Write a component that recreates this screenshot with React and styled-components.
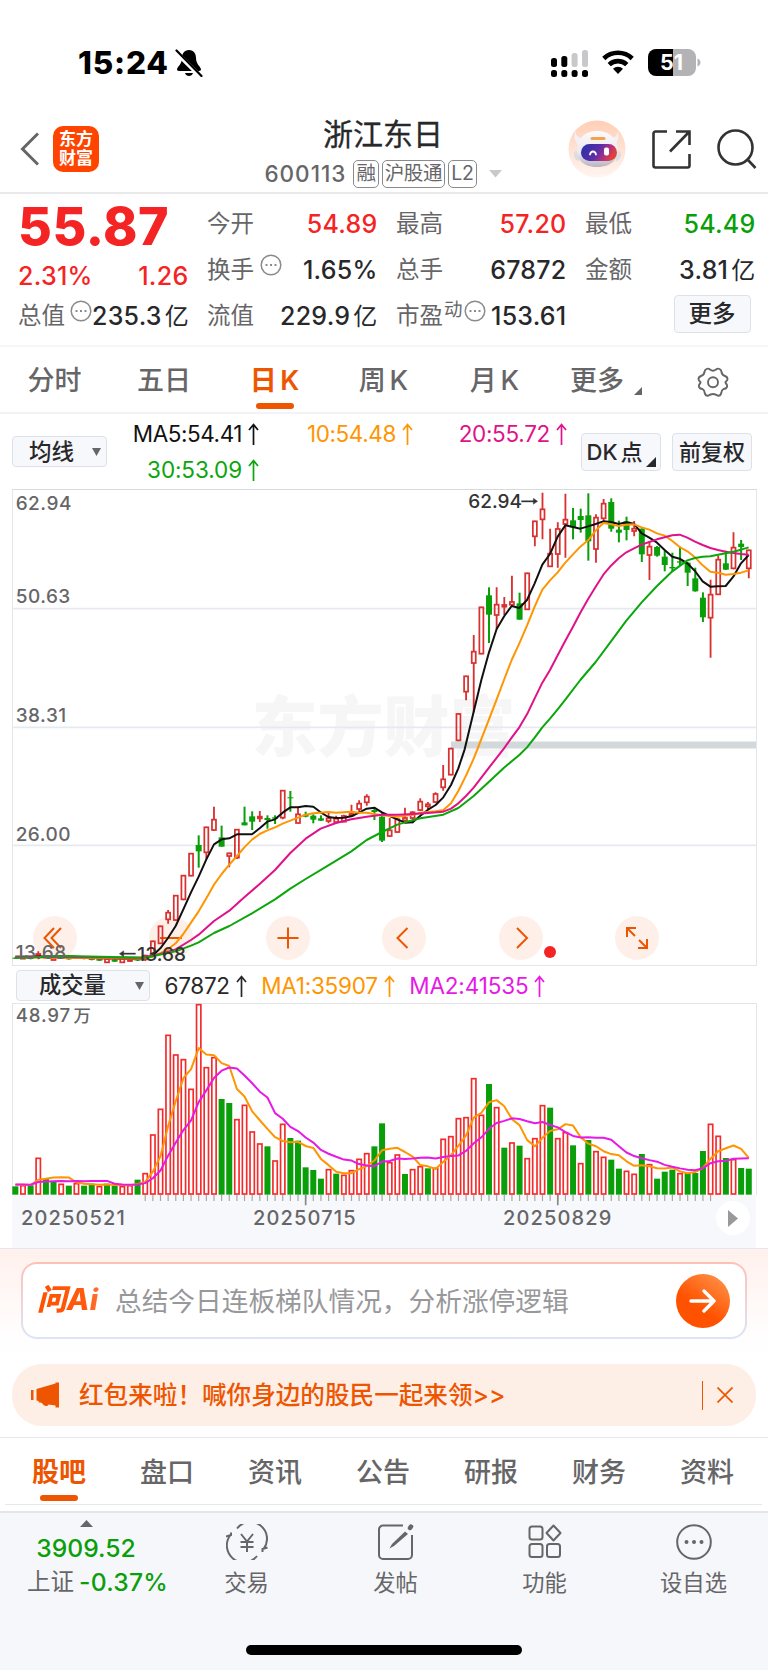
import React from "react";
import styled, { createGlobalStyle } from "styled-components";

const ORANGE = "#ee5500";
const RED = "#f52424";
const GREEN = "#0a9f0a";
const INK = "#28282b";
const GREY = "#666668";

const Global = createGlobalStyle`
  * { box-sizing: border-box; }
  body {
    margin: 0;
    background: #fff;
    color: ${INK};
    font-family: Inter, "Noto Sans CJK SC", sans-serif;
    font-size: 24px;
    line-height: 1;
    white-space: nowrap;
  }
  svg { display: block; flex: none; }
`;

const Page = styled.div`
  width: 768px;
  height: 1670px;
  overflow: hidden;
  display: flex;
  flex-direction: column;
`;

/* status bar */
const StatusBar = styled.div`
  height: 108px;
  padding: 17px 67px 0 78px;
  display: flex;
  align-items: center;
  justify-content: space-between;
  color: #000;
`;
const StatusSide = styled.div`
  display: flex;
  align-items: center;
  gap: ${(p) => p.$gap}px;
`;
const Clock = styled.span`
  font-size: 31.5px;
  font-weight: 800;
  letter-spacing: 0.8px;
`;

/* header */
const Header = styled.header`
  height: 86px;
  border-bottom: 2px solid #e9e9ec;
  display: grid;
  grid-template-columns: 239px 1fr 241px;
`;
const HeaderLeft = styled.div`
  display: flex;
  align-items: center;
  gap: 14px;
  padding: 0 0 2px 20px;
`;
const Logo = styled.div`
  width: 46px;
  height: 46px;
  border-radius: 10px;
  background: #ff4400;
  color: #fff;
  font-weight: 600;
  font-size: 17px;
  line-height: 19px;
  text-align: center;
  padding-top: 4px;
`;
const TitleBlock = styled.div`
  display: flex;
  flex-direction: column;
  align-items: center;
  padding-top: 10px;
`;
const Title = styled.h1`
  margin: 0;
  font-size: 30px;
  font-weight: 400;
  line-height: 32px;
  -webkit-text-stroke: 0.3px ${INK};
`;
const Codes = styled.div`
  display: flex;
  align-items: center;
  margin-top: 10px;
  gap: 3px;
  color: ${GREY};
  font-size: 22.5px;
  font-weight: 500;
  letter-spacing: 1px;
`;
const Badge = styled.span`
  height: 28px;
  padding: 0 2px;
  border: 1.5px solid #8a8a8c;
  border-radius: 5px;
  font-size: 19.5px;
  font-weight: 400;
  line-height: 25px;
  letter-spacing: -0.3px;
  &:nth-child(2) { margin-left: 4px; }
`;
const HeaderRight = styled.div`
  display: flex;
  align-items: center;
  justify-content: flex-end;
  padding: 0 11px 2px 0;
  gap: 26px;
`;

/* quote */
const Quote = styled.section`
  height: 153px;
  padding: 7px 12px 0 18px;
  border-bottom: 2px solid #f6f6f8;
  display: grid;
  grid-template-columns: repeat(4, 170.500px);
  column-gap: 18.500px;
`;
const QuoteCol = styled.div`
  display: flex;
  flex-direction: column;
`;
const Cell = styled.div`
  height: 46px;
  display: flex;
  align-items: center;
  justify-content: space-between;
  color: ${(p) => p.$color || INK};
  font-weight: 500;
  font-size: 25px;
  letter-spacing: 0.25px;
`;
const Yi = styled.span`
  margin-left: 3px;
  font-size: 24px;
  font-weight: 400;
`;
const Label = styled.span`
  color: ${GREY};
  font-size: 23.5px;
  font-weight: 400;
  letter-spacing: 0;
  display: inline-flex;
  align-items: center;
`;
const Sup = styled.sup`
  font-size: 18.5px;
  line-height: 18px;
  margin: -14px 0 0 1px;
  vertical-align: baseline;
`;
const Price = styled.div`
  height: 61px;
  font-size: 52px;
  line-height: 52px;
  font-weight: 800;
  letter-spacing: 0.5px;
  color: ${RED};
`;
const Change = styled.div`
  height: 28px;
  display: flex;
  justify-content: space-between;
  align-items: center;
  color: ${RED};
  font-size: 25px;
  font-weight: 500;
  letter-spacing: 0.3px;
  margin-bottom: 3px;
`;
const MoreWrap = styled.div`
  height: 46px;
  display: flex;
  justify-content: flex-end;
  padding: 2px 5px 0 0;
`;
const Button = styled.button`
  width: ${(p) => p.$w}px;
  height: ${(p) => p.$h}px;
  padding: ${(p) => p.$pad || 0};
  border: 1.5px solid #dfe1e8;
  border-radius: 4px;
  background: #f7f8fb;
  color: ${INK};
  font-family: inherit;
  font-size: ${(p) => p.$fs || 22}px;
  font-weight: 500;
  line-height: 1;
  word-spacing: -3px;
  display: flex;
  flex: none;
  align-items: center;
  justify-content: ${(p) => p.$justify || "center"};
  position: relative;
`;

/* period tabs */
const Tabs = styled.nav`
  height: 67px;
  border-bottom: 2px solid #f3f3f7;
  display: flex;
`;
const Tab = styled.div`
  width: ${(p) => p.$w}px;
  display: flex;
  flex-direction: column;
  align-items: center;
  padding-top: 20px;
  gap: 8px;
  color: ${(p) => (p.$active ? ORANGE : GREY)};
  font-size: 27px;
  font-weight: ${(p) => (p.$active ? 600 : 500)};
  line-height: 28px;
  word-spacing: -3.500px;
  &::after {
    content: "";
    width: 38px;
    height: 6px;
    border-radius: 3px;
    background: ${(p) => (p.$active ? ORANGE : "transparent")};
  }
`;
const TabText = styled.span`
  display: flex;
  align-items: flex-end;
  gap: 10px;
`;

/* indicator rows */
const MaRow = styled.div`
  height: 75px;
  display: flex;
  align-items: center;
  padding: 0 16px 0 12px;
`;
const MaGrid = styled.div`
  width: 474px;
  display: grid;
  grid-template-columns: 152px 154px 154px;
  row-gap: 14px;
  padding-top: 1px;
`;
const Ma = styled.span`
  color: ${(p) => p.$color};
  font-size: 22.5px;
  font-weight: 400;
  line-height: 22px;
  display: flex;
  justify-content: flex-end;
  align-items: center;
  gap: 6px;
  letter-spacing: ${(p) => p.$ls || 0}px;
`;
const MaButtons = styled.div`
  display: flex;
  gap: 11px;
`;
const Corner = styled.i`
  position: absolute;
  right: 4px;
  bottom: 3px;
  border: 5.5px solid ${INK};
  border-top-color: transparent;
  border-left-color: transparent;
`;

/* charts */
const ChartBox = styled.div`
  width: 745px;
  height: 477px;
  margin-left: 11.500px;
  position: relative;
  border: 1.5px solid #e4e5e9;
  border-top-color: #d8d9dc;
  flex: none;
`;
const Overlay = styled.div`
  position: absolute;
  inset: ${(p) => p.$inset};
`;
const Watermark = styled.div`
  position: absolute;
  left: 239px;
  top: 192px;
  font-size: 66px;
  line-height: 90px;
  font-weight: 900;
  color: #f6f6f7;
`;
const Controls = styled.div`
  position: absolute;
  left: 20px;
  bottom: 5px;
  display: flex;
  gap: 72.5px;
`;
const Round = styled.div`
  width: 44px;
  height: 44px;
  border-radius: 50%;
  background: #fef0e9;
  display: flex;
  align-items: center;
  justify-content: center;
`;
const Dot = styled.i`
  position: absolute;
  left: 531px;
  bottom: 7px;
  width: 12px;
  height: 12px;
  border-radius: 50%;
  background: ${RED};
`;
const VolRow = styled.div`
  height: 37px;
  display: flex;
  align-items: center;
  padding: 2px 0 0 16px;
  gap: 14.5px;
`;
const VolBox = styled.div`
  width: 745px;
  height: 192px;
  margin-left: 11.500px;
  border: 1.5px solid #e4e5e9;
  border-bottom: 0;
  position: relative;
  flex: none;
`;
const Axis = styled.div`
  width: 744px;
  height: 53px;
  margin-left: 12px;
  background: #f7f8fb;
  position: relative;
  flex: none;
`;
const Dates = styled.div`
  display: grid;
  grid-template-columns: 232px 250px 1fr auto;
  align-items: center;
  padding: 0 6px 0 9px;
  height: 46px;
  color: ${GREY};
  font-size: 20px;
  font-weight: 500;
  letter-spacing: 1.15px;
`;
const Next = styled.div`
  width: 34px;
  height: 34px;
  border-radius: 50%;
  background: #fff;
  display: flex;
  align-items: center;
  justify-content: center;
`;

/* assistant and banner */
const AskArea = styled.section`
  height: 116px;
  padding: 13px 21.500px 0 21px;
  border-top: 1px solid #e6e4ec;
  background: linear-gradient(#fff1ed, #fffefe 92px, #fff);
`;
const AskBox = styled.div`
  height: 77px;
  border: 2px solid transparent;
  border-radius: 16px;
  background: linear-gradient(#fff, #fff) padding-box, linear-gradient(#ffc0b5, #dde5f7) border-box;
  display: flex;
  align-items: center;
  padding: 0 15px 0 14px;
`;
const AskLogo = styled.span`
  width: 78px;
  padding-bottom: 2px;
  font-size: 29.5px;
  font-weight: 800;
  font-style: italic;
  letter-spacing: 0.2px;
  background: linear-gradient(90deg, #ff5000, #ff5a10 60%, #ff8a50);
  background-clip: text;
  -webkit-background-clip: text;
  color: transparent;
`;
const AskHint = styled.span`
  flex: 1;
  color: #98989b;
  font-size: 26.7px;
  line-height: 30px;
`;
const Go = styled.div`
  width: 54px;
  height: 54px;
  border-radius: 50%;
  background: linear-gradient(215deg, #ff8f45 10%, #ff5200 60%);
  display: flex;
  align-items: center;
  justify-content: center;
`;
const Banner = styled.div`
  height: 62px;
  margin: 0 12px;
  border-radius: 30px;
  background: #fdeee6;
  color: ${ORANGE};
  display: flex;
  align-items: center;
  padding: 0 23px 0 18px;
  font-size: 24.6px;
  font-weight: 500;
`;
const BannerText = styled.span`
  flex: 1;
  padding-left: 19px;
  line-height: 28px;
`;
const Divider = styled.i`
  width: 1.5px;
  height: 29px;
  background: ${ORANGE};
  margin-right: 14px;
`;
const InfoSection = styled.section`
  margin-top: 11px;
  padding: 0 6px 6px 5px;
  border-top: 1px solid #e6e7eb;
`;
const InfoTabs = styled.nav`
  height: 67px;
  border-bottom: 1px solid #e6e7eb;
  padding-top: 1px;
  display: flex;
`;

/* bottom bar */
const BottomBar = styled.footer`
  flex: 1;
  border-top: 2px solid #e3e5e9;
  background: #f6f7fa;
  display: flex;
  flex-direction: column;
  justify-content: space-between;
  align-items: center;
  padding-bottom: 15px;
`;
const BottomRow = styled.div`
  width: 768px;
  display: grid;
  grid-template-columns: 172px repeat(4, 149px);
`;
const Index = styled.div`
  display: flex;
  flex-direction: column;
  align-items: center;
  color: ${GREEN};
  font-size: 24.7px;
  font-weight: 500;
  padding-top: 7px;
`;
const IndexValue = styled.span`
  margin-top: 9px;
`;
const IndexChange = styled.span`
  margin: 9px 0 0 23px;
  display: flex;
  align-items: center;
  gap: 5px;
  letter-spacing: 0.2px;
`;
const Action = styled.div`
  display: flex;
  flex-direction: column;
  align-items: center;
  padding: 11px 0 0 0;
  gap: 10.5px;
  color: ${GREY};
  font-size: 22.3px;
  line-height: 24px;
`;
const HomeBar = styled.div`
  width: 276px;
  height: 10px;
  border-radius: 5px;
  background: #000;
`;

const Triangle = ({ w = 10, h = 8, up, color = GREY }) => (
  <svg width={w} height={h} viewBox="0 0 10 10" preserveAspectRatio="none" fill={color}>
    <path d={up ? "M0 10L5 0l5 10z" : "M0 0h10L5 10z"} />
  </svg>
);
const DotsIcon = styled.svg`
  margin: -10px 0 0 ${(p) => p.$gap}px;
`;
const MoreDots = ({ gap = 0 }) => (
  <DotsIcon $gap={gap} width="22" height="22" viewBox="0 0 22 22" fill="none" stroke="#8b8b8d" strokeWidth="1.5">
    <circle cx="11" cy="11" r="9.8" />
    <path d="M5.5 11h2M10 11h2M14.5 11h2" strokeWidth="2.2" />
  </DotsIcon>
);
const UpArrow = () => (
  <svg width="11" height="22" viewBox="0 0 11 22" fill="none" stroke="currentColor" strokeWidth="1.7">
    <path d="M5.5 22V1.5M1 7L5.5 1.5 10 7" />
  </svg>
);

/* candles: direction (1 up, 0 down), high, body top, body bottom, low */
const EARLY = [
  [0, 832, 833, 836, 837], [1, 832, 833, 835, 836], [0, 832, 834, 837, 838], [1, 814, 822, 826, 838], [1, 828, 830, 832, 834],
  [1, 830, 833, 840, 841], [0, 830, 832, 835, 836], [0, 832, 834, 838, 839], [1, 829, 831, 834, 835], [0, 831, 833, 837, 838],
  [0, 832, 835, 840, 841], [0, 833, 836, 842, 843], [1, 834, 837, 847, 848], [0, 836, 838, 845, 846], [1, 835, 837, 847, 848],
  [1, 837, 839, 843, 845], [0, 833, 836, 841, 843], [1, 824, 827, 838, 843], [1, 782, 784, 820, 822], [1, 737, 739, 790, 792],
  [1, 690, 698, 718, 731], [1, 645, 647, 720, 722], [1, 585, 587, 658, 661], [1, 519, 521, 587, 589], [0, 466, 495, 514, 563],
  [1, 440, 442, 517, 537], [1, 380, 419, 450, 452], [0, 437, 472, 500, 500], [1, 518, 520, 528, 562], [1, 447, 449, 533, 537],
  [0, 380, 427, 436, 436], [0, 394, 409, 425, 450], [1, 393, 410, 415, 426], [0, 406, 414, 420, 446], [0, 406, 412, 416, 432],
  [1, 330, 332, 413, 418], [0, 333, 352, 355, 395], [1, 382, 403, 429, 430], [0, 395, 404, 410, 412], [0, 403, 407, 419, 430],
  [0, 406, 415, 422, 423], [1, 395, 415, 423, 430], [1, 407, 416, 426, 427], [1, 404, 408, 425, 427], [1, 374, 402, 407, 409],
  [1, 361, 371, 387, 398], [1, 343, 350, 367, 377], [0, 386, 390, 396, 420], [0, 397, 410, 482, 486], [1, 414, 451, 468, 470],
  [1, 414, 418, 456, 458], [1, 383, 414, 421, 422], [1, 394, 397, 414, 430], [1, 355, 365, 390, 392], [1, 366, 373, 379, 388],
  [1, 337, 342, 366, 368], [1, 255, 298, 322, 332], [1, 203, 206, 284, 286], [1, 100, 102, 181, 184],
];
const LATE = [
  [1, 587, 589, 635, 661], [1, 465, 515, 549, 697], [1, 380, 382, 521, 523], [0, 322, 346, 404, 489], [1, 322, 374, 405, 447],
  [1, 351, 375, 380, 405], [1, 287, 366, 374, 376], [0, 338, 370, 419, 419], [1, 278, 280, 388, 390], [1, 122, 124, 169, 199],
  [1, 38, 88, 118, 178], [1, 146, 221, 259, 260], [1, 127, 147, 222, 263], [1, 41, 119, 132, 233], [0, 84, 121, 142, 178],
  [0, 86, 108, 120, 158], [0, 40, 106, 184, 242], [1, 103, 113, 207, 248], [1, 57, 71, 115, 130], [0, 55, 66, 146, 155],
  [0, 122, 149, 158, 187], [0, 110, 124, 150, 181], [1, 123, 146, 153, 169], [0, 145, 146, 223, 246], [1, 183, 200, 225, 300],
  [0, 198, 201, 227, 230], [0, 212, 230, 255, 274], [0, 218, 261, 265, 274], [0, 200, 244, 248, 256], [0, 246, 248, 278, 318],
  [0, 263, 295, 334, 335], [0, 337, 353, 412, 426], [1, 299, 344, 413, 533], [1, 227, 239, 343, 345], [0, 212, 250, 269, 270],
  [1, 157, 203, 265, 268], [0, 180, 191, 201, 240], [1, 209, 211, 265, 295],
];
const CANDLES = [...EARLY.map(([d, ...v]) => [d, ...v.map((n) => n + 600)]), ...LATE];

const VOLUME = [
  "g25", "r29", "g28", "r111", "g47", "g41", "r33", "g27", "r35", "g27", "g33", "r26", "g33", "g27", "r26", "r29", "g45", "r65",
  "r181", "r258", "r480", "r421", "r407", "r318", "r572", "r383", "r413", "g287", "g275", "r227", "r270", "r190", "r154", "g145",
  "r103", "r213", "g170", "g162", "g82", "g74", "g48", "r77", "g63", "r60", "r74", "r108", "r125", "g145", "g214", "r98", "r121",
  "g62", "r77", "r86", "g79", "r81", "r168", "r176", "r230", "r233", "r350", "r240", "g332", "r263", "g141", "r157", "g147",
  "r110", "r170", "r269", "g261", "r170", "r188", "g148", "r95", "g164", "r131", "r114", "g105", "g78", "r72", "r63", "g122",
  "r92", "g48", "g69", "g75", "r65", "g65", "g65", "g131", "r213", "r177", "g110", "r107", "g80", "g78",
].map((s) => ({ up: s[0] === "r", v: Number(s.slice(1)) }));

const LINES = [
  {
    color: "#111",
    a: "46,830 200,829 300,835 420,838 459,826 481,805 504,774 527,738 550,688 573,637 596,590 619,538 642,493 665,478 688,475 711,463 756,463 779,445 802,425 825,418 848,398 871,382 894,382 917,378 940,380 962,397 985,411 1008,414 1031,413 1054,409 1077,398 1100,386 1123,383 1146,397 1169,408 1192,418 1215,428 1238,427 1261,407 1284,389 1307,375 1330,352 1353,315 1375,265",
    b: "74,808 101,695 124,600 147,517 170,447 193,408 215,378 238,384 261,360 284,310 307,254 330,222 353,170 376,136 399,141 421,146 444,139 467,132 490,124 513,126 536,132 559,127 582,131 605,160 628,173 651,188 674,210 697,230 719,236 742,250 765,273 788,304 811,320 834,319 857,318 880,290 903,250 926,225",
  },
  {
    color: "#ff9500",
    a: "46,832 420,836 459,830 504,808 527,790 550,762 573,728 596,694 619,655 642,614 665,582 688,554 711,528 733,502 756,479 779,462 802,451 825,442 848,431 871,422 894,413 917,404 940,400 985,396 1008,398 1054,395 1077,398 1100,398 1123,402 1146,406 1192,410 1238,404 1261,398 1307,394 1330,390 1353,370 1375,333 1398,287 1421,236",
    b: "112,808 147,718 170,658 193,597 215,540 238,490 261,437 284,380 307,329 330,301 353,277 376,248 399,223 421,200 444,181 467,152 490,129 513,133 536,138 559,134 582,133 605,142 628,149 651,160 674,167 697,183 719,201 742,214 765,232 788,256 811,275 834,278 857,284 880,282 903,278 926,271",
  },
  {
    color: "#e0128a",
    a: "46,830 420,833 481,822 527,808 573,780 596,764 642,723 688,692 733,652 779,612 825,570 871,519 917,476 962,446 1008,429 1054,418 1100,410 1146,404 1192,404 1238,402 1284,399 1330,395 1353,386 1375,370 1398,348 1421,323 1467,263 1512,205 1535,173 1558,142 1581,103 1604,55",
    b: "307,608 330,570 353,526 376,482 399,440 421,398 444,358 467,320 490,284 513,257 536,235 559,217 582,205 605,194 628,186 651,178 674,172 697,166 719,164 742,173 765,185 788,195 811,204 834,210 857,215 880,219 903,222 926,224",
  },
  {
    color: "#0aa60a",
    a: "46,834 200,828 436,833 527,814 573,797 596,787 642,759 688,738 756,700 825,658 871,626 917,597 985,556 1054,514 1100,480 1146,456 1192,434 1215,427 1261,415 1330,404 1375,384 1421,348 1467,305 1512,263 1558,225 1581,202 1604,173",
    b: "307,742 330,716 353,688 376,659 421,600 467,546 513,484 559,422 605,367 651,318 697,274 742,241 765,234 788,230 811,229 834,224 857,220 880,215 903,209 926,202",
  },
];
const move = (pts, dx, dy) =>
  pts.split(" ").map((p) => {
    const [x, y] = p.split(",").map(Number);
    return `${x + dx},${y + dy}`;
  }).join(" ");
const X = (i) => 46 + i * 22.92;

function PriceChart() {
  return (
    <svg width="745" height="477" viewBox="36 27 2235 1431">
      {[386, 742, 1096].map((y) => (
        <path key={y} d={`M36 ${y}H2268`} stroke="#e6e9ef" strokeWidth="5" />
      ))}
      <path d="M1353 795H2268" stroke="#d3d8db" strokeWidth="21" />
      {CANDLES.map(([up, hi, top, bot, lo], i) => {
        const x = X(i);
        return up ? (
          <g key={i} stroke="#d93030" fill="none">
            <path d={`M${x} ${hi}V${top}M${x} ${bot}V${lo}`} strokeWidth="5.5" />
            <rect x={x - 6} y={top} width="12" height={Math.max(bot - top, 3)} strokeWidth="5.2" />
          </g>
        ) : (
          <g key={i} fill="#0a9f0a">
            <rect x={x - 3} y={hi} width="6" height={lo - hi} />
            <rect x={x - 9} y={top} width="18" height={bot - top} />
          </g>
        );
      })}
      {LINES.map((l) => (
        <polyline key={l.color} points={`${move(l.a, 0, 600)} ${move(l.b, 1320, 0)}`} fill="none" stroke={l.color} strokeWidth="6" strokeLinejoin="round" />
      ))}
      <g fontSize="57" fontWeight="500" fill={GREY} letterSpacing="1.5">
        <text x="47" y="90">62.94</text>
        <text x="47" y="368">50.63</text>
        <text x="47" y="725">38.31</text>
        <text x="47" y="1082">26.00</text>
        <text x="47" y="1437">13.68</text>
      </g>
      <g fontSize="57" fontWeight="500" fill="#333">
        <text x="1405" y="85">62.94</text>
        <text x="412" y="1443">13.68</text>
      </g>
      <g stroke="#333" strokeWidth="5" fill="#333">
        <path d="M1564 64H1605" />
        <path d="M1600 55L1613 64 1600 73z" strokeWidth="1" />
        <path d="M366 1421H407" />
        <path d="M371 1412L358 1421 371 1430z" strokeWidth="1" />
      </g>
    </svg>
  );
}

const average = (n) =>
  VOLUME.map((_, i) => {
    let sum = 0;
    for (let k = i - n + 1; k <= i; k++) sum += k < 0 ? 31 : VOLUME[k].v;
    return `${X(i)},${575 - sum / n}`;
  }).join(" ");

function VolumeChart() {
  return (
    <svg width="745" height="192" viewBox="36 0 2235 576">
      {VOLUME.map(({ up, v }, i) =>
        up ? (
          <rect key={i} x={X(i) - 6.5} y={577 - v} width="13" height={v - 4} fill="#fff" stroke="#f52a2a" strokeWidth="5" />
        ) : (
          <rect key={i} x={X(i) - 9} y={575 - v} width="18" height={v} fill="#0a9f0a" />
        )
      )}
      <polyline points={average(5)} fill="none" stroke="#ff9500" strokeWidth="6" strokeLinejoin="round" />
      <polyline points={average(10)} fill="none" stroke="#e619e6" strokeWidth="6" strokeLinejoin="round" />
      <text x="47" y="58" fontSize="56" fontWeight="500" letterSpacing="2.5" fill={GREY}>48.97<tspan dx="8" fontSize="52">万</tspan></text>
    </svg>
  );
}

function Ticks() {
  const small = [];
  for (let i = 17; i <= 91; i++) small.push(`M${X(i)} 0V18`);
  return (
    <svg width="744" height="12" viewBox="36 0 2232 36" stroke="#a5a5a8" strokeWidth="3.5">
      <path d={small.join("")} />
      <path d={`M${X(38)} 0V31M${X(71)} 0V31`} strokeWidth="5" stroke="#888" />
    </svg>
  );
}

const ControlIcon = ({ d }) => (
  <svg width="24" height="24" viewBox="0 0 24 24" fill="none" stroke={ORANGE} strokeWidth="2">
    <path d={d} />
  </svg>
);

const Robot = () => (
  <svg width="58" height="58" viewBox="0 0 58 58">
    <defs>
      <linearGradient id="halo" x1="0" y1="0" x2="0" y2="1">
        <stop offset="0" stopColor="#ffceb5" />
        <stop offset="1" stopColor="#fff5f0" />
      </linearGradient>
      <linearGradient id="head" x1="0" y1="0" x2="0" y2="1">
        <stop offset="0" stopColor="#fbfafc" />
        <stop offset="0.6" stopColor="#ebe8ee" />
        <stop offset="1" stopColor="#b9b4bf" />
      </linearGradient>
      <linearGradient id="visor" x1="0" y1="0" x2="1" y2="0.3">
        <stop offset="0" stopColor="#2630a8" />
        <stop offset="0.55" stopColor="#5c2ea8" />
        <stop offset="0.8" stopColor="#b52f80" />
        <stop offset="1" stopColor="#e0403c" />
      </linearGradient>
    </defs>
    <circle cx="29" cy="29" r="28.5" fill="url(#halo)" />
    <path d="M7.500 11c0 5 3 7 8 7l-4 8c-5-4-6-10-4-15zM49.500 11c0 5-3 7-8 7l4 8c5-4 6-10 4-15z" fill="#f3f1f5" />
    <path d="M6 34c0-3 3-4 5-3v10c-3 0-5-3-5-7zM53 34c0-3-3-4-5-3v10c3 0 5-3 5-7z" fill="#dedbe3" />
    <path d="M29 11c13 0 20 8 21 18 1 12-9 18-21 18S8 41 9 29c1-10 7-18 20-18z" fill="url(#head)" />
    <rect x="13" y="24" width="36" height="17" rx="8.500" fill="url(#visor)" />
    <path d="M24 18.500h12" stroke="#f4a34d" strokeWidth="3" strokeLinecap="round" />
    <path d="M22 34.500c1-4 5-4 6 0" fill="none" stroke="#fff" strokeWidth="1.800" strokeLinecap="round" />
    <rect x="36" y="27.500" width="5" height="8" rx="2" fill="#fff" />
  </svg>
);

export default function App() {
  return (
    <Page>
      <Global />
      <StatusBar>
        <StatusSide $gap={6}>
          <Clock>15:24</Clock>
          <svg width="28" height="28" viewBox="0 0 28 28">
            <path d="M14 1c-5 0-7 4-7 8 0 6-4 8-5 11 0 1 .5 2 2 2h20c1.500 0 2-1 2-2-1-3-5-5-5-11 0-4-2-8-7-8zM10 24c1 4 7 4 8 0z" fill="#000" />
            <path d="M1 3l25 25" stroke="#fff" strokeWidth="4.500" />
            <path d="M1.500 1.500L26.500 27" stroke="#000" strokeWidth="2.200" strokeLinecap="round" />
          </svg>
        </StatusSide>
        <StatusSide $gap={14}>
          <svg width="37" height="28" viewBox="0 0 37 28">
            <g fill="#000">
              <rect x="0" y="9" width="6" height="9" rx="2.500" />
              <rect x="10.300" y="7" width="6" height="11" rx="2.500" />
              <rect x="0" y="21" width="6" height="7" rx="2.500" />
              <rect x="10.300" y="21" width="6" height="7" rx="2.500" />
              <rect x="20.600" y="21" width="6" height="7" rx="2.500" />
              <rect x="31" y="21" width="6" height="7" rx="2.500" />
            </g>
            <g fill="#c8c8ca">
              <rect x="20.600" y="4" width="6" height="14" rx="2.500" />
              <rect x="31" y="1" width="6" height="17" rx="2.500" />
            </g>
          </svg>
          <svg width="32" height="25" viewBox="0 0 32 25" fill="none" stroke="#000" strokeWidth="4.600">
            <path d="M1.800 8.500a20.500 20.500 0 0 1 28.400 0M7.200 14.600a12.800 12.800 0 0 1 17.600 0" />
            <path d="M16 24l-5-5.300a7.500 7.500 0 0 1 10 0z" fill="#000" stroke="none" />
          </svg>
          <svg width="53" height="27" viewBox="0 0 53 27">
            <path d="M8 0h17v27H8a8 8 0 0 1-8-8V8a8 8 0 0 1 8-8z" fill="#000" />
            <path d="M25 0h15a8 8 0 0 1 8 8v11a8 8 0 0 1-8 8H25zM49.500 9.500c4 1.500 4 6.500 0 8z" fill="#b3b3b5" />
            <text x="23.500" y="21" textAnchor="middle" fontSize="21.500" fontWeight="700" fill="#fff">51</text>
          </svg>
        </StatusSide>
      </StatusBar>

      <Header>
        <HeaderLeft>
          <svg width="19" height="34" viewBox="0 0 19 34" fill="none" stroke={GREY} strokeWidth="3">
            <path d="M18 1.500L2.500 17 18 32.500" />
          </svg>
          <Logo>东方<br />财富</Logo>
        </HeaderLeft>
        <TitleBlock>
          <Title>浙江东日</Title>
          <Codes>
            <span>600113</span>
            <Badge>融</Badge>
            <Badge>沪股通</Badge>
            <Badge>L2</Badge>
            <svg width="22" height="8" viewBox="0 0 22 8"><path d="M9 0h13l-6.500 7.500z" fill="#c9c9cb" /></svg>
          </Codes>
        </TitleBlock>
        <HeaderRight>
          <Robot />
          <svg width="39" height="39" viewBox="0 0 39 39" fill="none" stroke="#333" strokeWidth="2.600">
            <path d="M15 1.500H3.500a2 2 0 0 0-2 2v32a2 2 0 0 0 2 2h32a2 2 0 0 0 2-2V24M24 1.500h13.500V15M37 2L18 21.500" />
          </svg>
          <svg width="40" height="40" viewBox="0 0 40 40" fill="none" stroke="#333" strokeWidth="2.600">
            <circle cx="18.500" cy="18.500" r="17" />
            <path d="M31 31l7.500 8" />
          </svg>
        </HeaderRight>
      </Header>

      <Quote>
        <QuoteCol>
          <Price>55.87</Price>
          <Change><span>2.31%</span><span>1.26</span></Change>
          <Cell><Label>总值<MoreDots gap={5} /></Label><span>235.3<Yi>亿</Yi></span></Cell>
        </QuoteCol>
        <QuoteCol>
          <Cell $color={RED}><Label>今开</Label>54.89</Cell>
          <Cell><Label>换手<MoreDots gap={6} /></Label>1.65%</Cell>
          <Cell><Label>流值</Label><span>229.9<Yi>亿</Yi></span></Cell>
        </QuoteCol>
        <QuoteCol>
          <Cell $color={RED}><Label>最高</Label>57.20</Cell>
          <Cell><Label>总手</Label>67872</Cell>
          <Cell><Label>市盈<Sup>动</Sup><MoreDots gap={1.5} /></Label>153.61</Cell>
        </QuoteCol>
        <QuoteCol>
          <Cell $color={GREEN}><Label>最低</Label>54.49</Cell>
          <Cell><Label>金额</Label><span>3.81<Yi>亿</Yi></span></Cell>
          <MoreWrap><Button $w={77} $h={38} $fs={23.5}>更多</Button></MoreWrap>
        </QuoteCol>
      </Quote>

      <Tabs>
        <Tab $w={109}>分时</Tab>
        <Tab $w={110}>五日</Tab>
        <Tab $w={111}$active>日 K</Tab>
        <Tab $w={107}>周 K</Tab>
        <Tab $w={115}>月 K</Tab>
        <Tab $w={108}>
          <TabText>更多<svg width="8" height="8" viewBox="0 0 8 8"><path d="M8 0v8H0z" fill={GREY} /></svg></TabText>
        </Tab>
        <Tab $w={106}>
          <svg width="32" height="30" viewBox="0 0 32 30" fill="none" stroke={GREY} strokeWidth="1.900" strokeLinejoin="round">
            <path d="M13 2.500Q16 4.800 19 2.500Q20.500 1 22.500 2Q24.500 3 24.500 5Q25 8 28 9Q30.500 10 30.500 12Q30.500 13.500 29 14.500Q28 15.500 29 16.500Q30.500 18 30 20Q29 22 26.500 22Q24.500 23 24.300 26Q23.500 29 21 28.800Q18.500 27 16 27Q13.500 27 11 28.800Q8.500 29 7.700 26Q7.500 23 5.500 22Q3 22 2 20Q1.500 18 3 16.500Q4 15.500 3 14.500Q1.500 13.500 1.500 12Q1.500 10 4 9Q7 8 7.500 5Q7.500 3 9.500 2Q11.500 1 13 2.500z" />
            <circle cx="16" cy="15.300" r="5" />
          </svg>
        </Tab>
      </Tabs>

      <MaRow>
        <Button $w={95} $h={31} $fs={22.5} $pad="1px 5px 0 16px" $justify="space-between">均线<Triangle w={9} h={8} /></Button>
        <MaGrid>
          <Ma $color="#111" $ls={-0.45}>MA5:54.41<UpArrow /></Ma>
          <Ma $color="#ff9500" $ls={-0.4}>10:54.48<UpArrow /></Ma>
          <Ma $color="#e0128a" $ls={-0.3}>20:55.72<UpArrow /></Ma>
          <Ma $color="#0aa60a" $ls={-0.1}>30:53.09<UpArrow /></Ma>
        </MaGrid>
        <MaButtons>
          <Button $w={80} $h={38} $pad="0 13px 0 0">DK 点<Corner /></Button>
          <Button $w={80} $h={38}>前复权</Button>
        </MaButtons>
      </MaRow>

      <ChartBox>
        <Watermark>东方财富</Watermark>
        <Controls>
          <Round><ControlIcon d="M11 2L1.500 12 11 22M18 2L8.500 12 18 22" /></Round>
          <Round><ControlIcon d="M1 12h22" /></Round>
          <Round><ControlIcon d="M1.500 12h21M12 1.500v21" /></Round>
          <Round><ControlIcon d="M15.500 2L5.500 12l10 10" /></Round>
          <Round><ControlIcon d="M8 2l10 10L8 22" /></Round>
          <Round><ControlIcon d="M2 11V2h9M2 2l8 8M22 13v9h-9M22 22l-8-8" /></Round>
        </Controls>
        <Dot />
        <Overlay $inset="-1px auto auto -0.500px"><PriceChart /></Overlay>
      </ChartBox>

      <VolRow>
        <Button $w={134} $h={31} $fs={22.3} $pad="0 5px 0 22px" $justify="space-between">成交量<Triangle w={9} h={8} /></Button>
        <Ma $color={INK} $ls={-0.3}>67872<UpArrow /></Ma>
        <Ma $color="#ff9500" $ls={-0.25}>MA1:35907<UpArrow /></Ma>
        <Ma $color="#e619e6" $ls={-0.15}>MA2:41535<UpArrow /></Ma>
      </VolRow>

      <VolBox><Overlay $inset="-1px auto auto -0.500px"><VolumeChart /></Overlay></VolBox>
      <Axis>
        <Overlay $inset="0 auto auto 0"><Ticks /></Overlay>
        <Dates>
          <span>20250521</span>
          <span>20250715</span>
          <span>20250829</span>
          <Next><svg width="10" height="17" viewBox="0 0 10 17"><path d="M0 0l10 8.500L0 17z" fill="#99999c" /></svg></Next>
        </Dates>
      </Axis>

      <AskArea>
        <AskBox>
          <AskLogo>问Ai</AskLogo>
          <AskHint>总结今日连板梯队情况，分析涨停逻辑</AskHint>
          <Go>
            <svg width="27" height="24" viewBox="0 0 27 24" fill="none" stroke="#fff" strokeWidth="3.400" strokeLinecap="round" strokeLinejoin="round">
              <path d="M2 12h23M15 2l10 10-10 10" />
            </svg>
          </Go>
        </AskBox>
      </AskArea>

      <Banner>
        <svg width="30" height="26" viewBox="0 0 30 26" fill={ORANGE}>
          <path d="M1 8h2.500v10H1zM6.500 7L25.500 1.500V0.500h3.500v25h-3.500v-2l-7-1c-1 2-3 2-5 .500-1-1-1-2-3-2.500H9l-.500-1.500-2-.500z" />
        </svg>
        <BannerText>红包来啦！喊你身边的股民一起来领&gt;&gt;</BannerText>
        <Divider />
        <svg width="16" height="16" viewBox="0 0 16 16" fill="none" stroke={ORANGE} strokeWidth="1.700"><path d="M.5.500l15 15M15.500.500l-15 15" /></svg>
      </Banner>

      <InfoSection>
        <InfoTabs>
          {["股吧", "盘口", "资讯", "公告", "研报", "财务", "资料"].map((t, i) => (
            <Tab key={t} $w={108} $active={i === 0}>{t}</Tab>
          ))}
        </InfoTabs>
      </InfoSection>

      <BottomBar>
        <BottomRow>
          <Index>
            <Triangle w={13} h={7} up />
            <IndexValue>3909.52</IndexValue>
            <IndexChange><Label>上证</Label>-0.37%</IndexChange>
          </Index>
          <Action>
            <svg width="42" height="36" viewBox="0 0 42 36" fill="none" stroke={GREY} strokeWidth="2">
              <path d="M11 4.500A16.500 16.500 0 0 1 37.500 25M36.500 28V25l5-1.500M31 32A16.500 16.500 0 0 1 4.500 11M0 12.500l5-1.500V8.500" />
              <path d="M15 10l6 7.500 6-7.500M21 17.500V28M14.500 18h13M14.500 23h13" />
            </svg>
            交易
          </Action>
          <Action>
            <svg width="36" height="36" viewBox="0 0 36 36" fill="none" stroke={GREY} strokeWidth="2">
              <path d="M25 1.500H5a4 4 0 0 0-4 4V31a4 4 0 0 0 4 4h25a4 4 0 0 0 4-4V11" />
              <path d="M32 4l1-1.500" strokeWidth="4.500" strokeLinecap="round" />
              <path d="M27 7.500l3 2.500-14 12-4.500 2.500L14 20z" fill={GREY} stroke="none" />
            </svg>
            发帖
          </Action>
          <Action>
            <svg width="34" height="36" viewBox="0 0 34 36" fill="none" stroke={GREY} strokeWidth="2">
              <rect x="1.500" y="2.500" width="13" height="13" rx="2.500" />
              <rect x="1.500" y="20" width="13" height="13" rx="2.500" />
              <rect x="19" y="20" width="13" height="13" rx="2.500" />
              <path d="M25.500 1.500l7 7.500-7 7.500-7-7.500z" strokeLinejoin="round" />
            </svg>
            功能
          </Action>
          <Action>
            <svg width="36" height="36" viewBox="0 0 36 36" fill="none" stroke={GREY} strokeWidth="2">
              <circle cx="18" cy="18" r="16.800" />
              <path d="M10.500 18h.01M18 18h.01M25.500 18h.01" strokeWidth="4" strokeLinecap="round" />
            </svg>
            设自选
          </Action>
        </BottomRow>
        <HomeBar />
      </BottomBar>
    </Page>
  );
}
